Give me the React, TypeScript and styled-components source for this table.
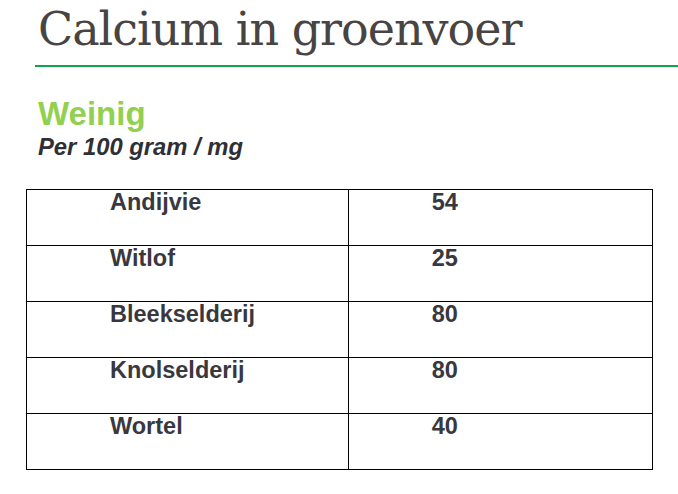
import React from 'react'
import styled, { createGlobalStyle } from 'styled-components'

const GlobalStyle = createGlobalStyle`
  html, body {
    margin: 0;
    padding: 0;
    background: #ffffff;
  }
`

const Slide = styled.div`
  width: 678px;
  height: 494px;
  overflow: hidden;
  display: flex;
  flex-direction: column;
`

const Title = styled.h1`
  margin: 0 0 0 35px;
  padding: 0 0 0 3px;
  height: 65px;
  font-family: 'DejaVu Serif', 'Liberation Serif', serif;
  font-weight: normal;
  font-size: 46px;
  letter-spacing: -1px;
  line-height: 58px;
  color: #484444;
  border-bottom: 2px solid #10a64f;
`

const Heading = styled.h2`
  margin: 29px 0 0 38px;
  font-family: 'Liberation Sans', Arial, sans-serif;
  font-weight: bold;
  font-size: 33px;
  line-height: 36px;
  color: #92d050;
`

const Sub = styled.div`
  margin: 2px 0 0 38px;
  font-family: 'Liberation Sans', Arial, sans-serif;
  font-weight: bold;
  font-style: italic;
  font-size: 23.8px;
  line-height: 26px;
  color: #2f2f35;
`

const Table = styled.table`
  margin: 29px 0 0 26px;
  width: 627px;
  border-collapse: collapse;
  font-family: 'Liberation Sans', Arial, sans-serif;
  font-weight: bold;
  font-size: 23.5px;
  color: #38383e;
`

const Cell = styled.td<{ $indent: number; $width: number }>`
  border: 1px solid #000;
  height: 56px;
  width: ${(p) => p.$width}px;
  padding: 0 0 0 ${(p) => p.$indent}px;
  vertical-align: top;
  box-sizing: border-box;
  line-height: 24px;
`

const rows: [string, string][] = [
  ['Andijvie', '54'],
  ['Witlof', '25'],
  ['Bleekselderij', '80'],
  ['Knolselderij', '80'],
  ['Wortel', '40'],
]

export default function App(): React.ReactElement {
  return (
    <>
      <GlobalStyle />
      <Slide>
        <Title>Calcium in groenvoer</Title>
        <Heading>Weinig</Heading>
        <Sub>Per 100 gram / mg</Sub>
        <Table>
          <tbody>
            {rows.map(([name, value]) => (
              <tr key={name}>
                <Cell $indent={83} $width={322}>{name}</Cell>
                <Cell $indent={83} $width={305}>{value}</Cell>
              </tr>
            ))}
          </tbody>
        </Table>
      </Slide>
    </>
  )
}
